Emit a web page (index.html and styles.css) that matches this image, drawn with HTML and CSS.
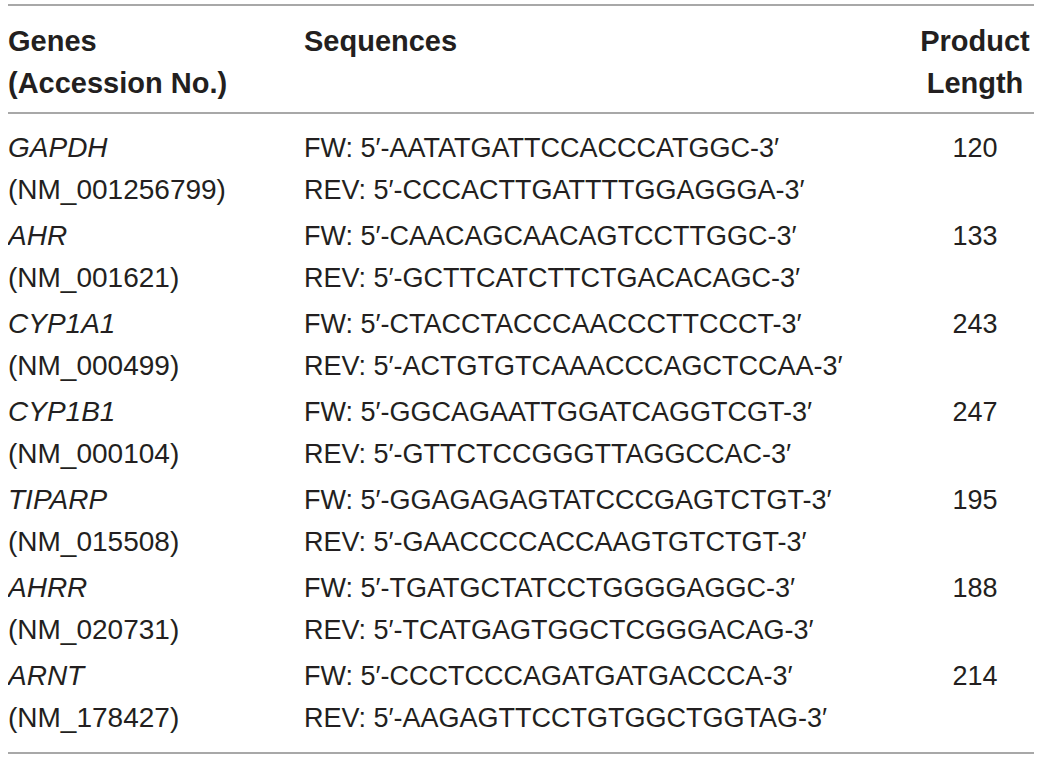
FILE: index.html
```html
<!DOCTYPE html>
<html>
<head>
<meta charset="utf-8">
<link rel="stylesheet" href="styles.css">
</head>
<body>
<table class="primers">
  <thead>
    <tr>
      <th class="col-gene"><div>Genes</div><div>(Accession No.)</div></th>
      <th class="col-seq"><div>Sequences</div></th>
      <th class="col-len"><div>Product</div><div>Length</div></th>
    </tr>
  </thead>
  <tbody>
    <tr>
      <td class="col-gene"><div class="gene">GAPDH</div><div>(NM_001256799)</div></td>
      <td class="col-seq"><div>FW: 5′-AATATGATTCCACCCATGGC-3′</div><div>REV: 5′-CCCACTTGATTTTGGAGGGA-3′</div></td>
      <td class="col-len"><div>120</div></td>
    </tr>
    <tr>
      <td class="col-gene"><div class="gene">AHR</div><div>(NM_001621)</div></td>
      <td class="col-seq"><div>FW: 5′-CAACAGCAACAGTCCTTGGC-3′</div><div>REV: 5′-GCTTCATCTTCTGACACAGC-3′</div></td>
      <td class="col-len"><div>133</div></td>
    </tr>
    <tr>
      <td class="col-gene"><div class="gene">CYP1A1</div><div>(NM_000499)</div></td>
      <td class="col-seq"><div>FW: 5′-CTACCTACCCAACCCTTCCCT-3′</div><div>REV: 5′-ACTGTGTCAAACCCAGCTCCAA-3′</div></td>
      <td class="col-len"><div>243</div></td>
    </tr>
    <tr>
      <td class="col-gene"><div class="gene">CYP1B1</div><div>(NM_000104)</div></td>
      <td class="col-seq"><div>FW: 5′-GGCAGAATTGGATCAGGTCGT-3′</div><div>REV: 5′-GTTCTCCGGGTTAGGCCAC-3′</div></td>
      <td class="col-len"><div>247</div></td>
    </tr>
    <tr>
      <td class="col-gene"><div class="gene">TIPARP</div><div>(NM_015508)</div></td>
      <td class="col-seq"><div>FW: 5′-GGAGAGAGTATCCCGAGTCTGT-3′</div><div>REV: 5′-GAACCCCACCAAGTGTCTGT-3′</div></td>
      <td class="col-len"><div>195</div></td>
    </tr>
    <tr>
      <td class="col-gene"><div class="gene">AHRR</div><div>(NM_020731)</div></td>
      <td class="col-seq"><div>FW: 5′-TGATGCTATCCTGGGGAGGC-3′</div><div>REV: 5′-TCATGAGTGGCTCGGGACAG-3′</div></td>
      <td class="col-len"><div>188</div></td>
    </tr>
    <tr>
      <td class="col-gene"><div class="gene">ARNT</div><div>(NM_178427)</div></td>
      <td class="col-seq"><div>FW: 5′-CCCTCCCAGATGATGACCCA-3′</div><div>REV: 5′-AAGAGTTCCTGTGGCTGGTAG-3′</div></td>
      <td class="col-len"><div>214</div></td>
    </tr>
  </tbody>
</table>
</body>
</html>
```

FILE: styles.css
```css
html, body {
  background: #ffffff;
}
body {
  margin: 4px 8px 0;
  font-family: "Liberation Sans", Arial, sans-serif;
  font-size: 27px;
  color: #231f20;
}
.primers {
  width: 1026px;
  border-collapse: collapse;
  border-top: 2px solid #a8a8a8;
  border-bottom: 2px solid #a8a8a8;
}
.primers th,
.primers td {
  padding: 2px 0;
  vertical-align: top;
  line-height: 42px;
  text-align: left;
  font-weight: normal;
}
.primers thead th {
  font-weight: bold;
  font-size: 29px;
  padding: 14px 0 8px;
  border-bottom: 2px solid #a8a8a8;
}
.primers tbody tr:first-child td {
  padding-top: 13px;
}
.primers tbody tr:last-child td {
  padding-bottom: 13px;
}
.col-gene {
  width: 296px;
}
.primers td.col-gene {
  font-size: 28px;
}
.col-len {
  width: 118px;
}
.primers .col-len {
  text-align: center;
}
.gene {
  font-style: italic;
}
```
